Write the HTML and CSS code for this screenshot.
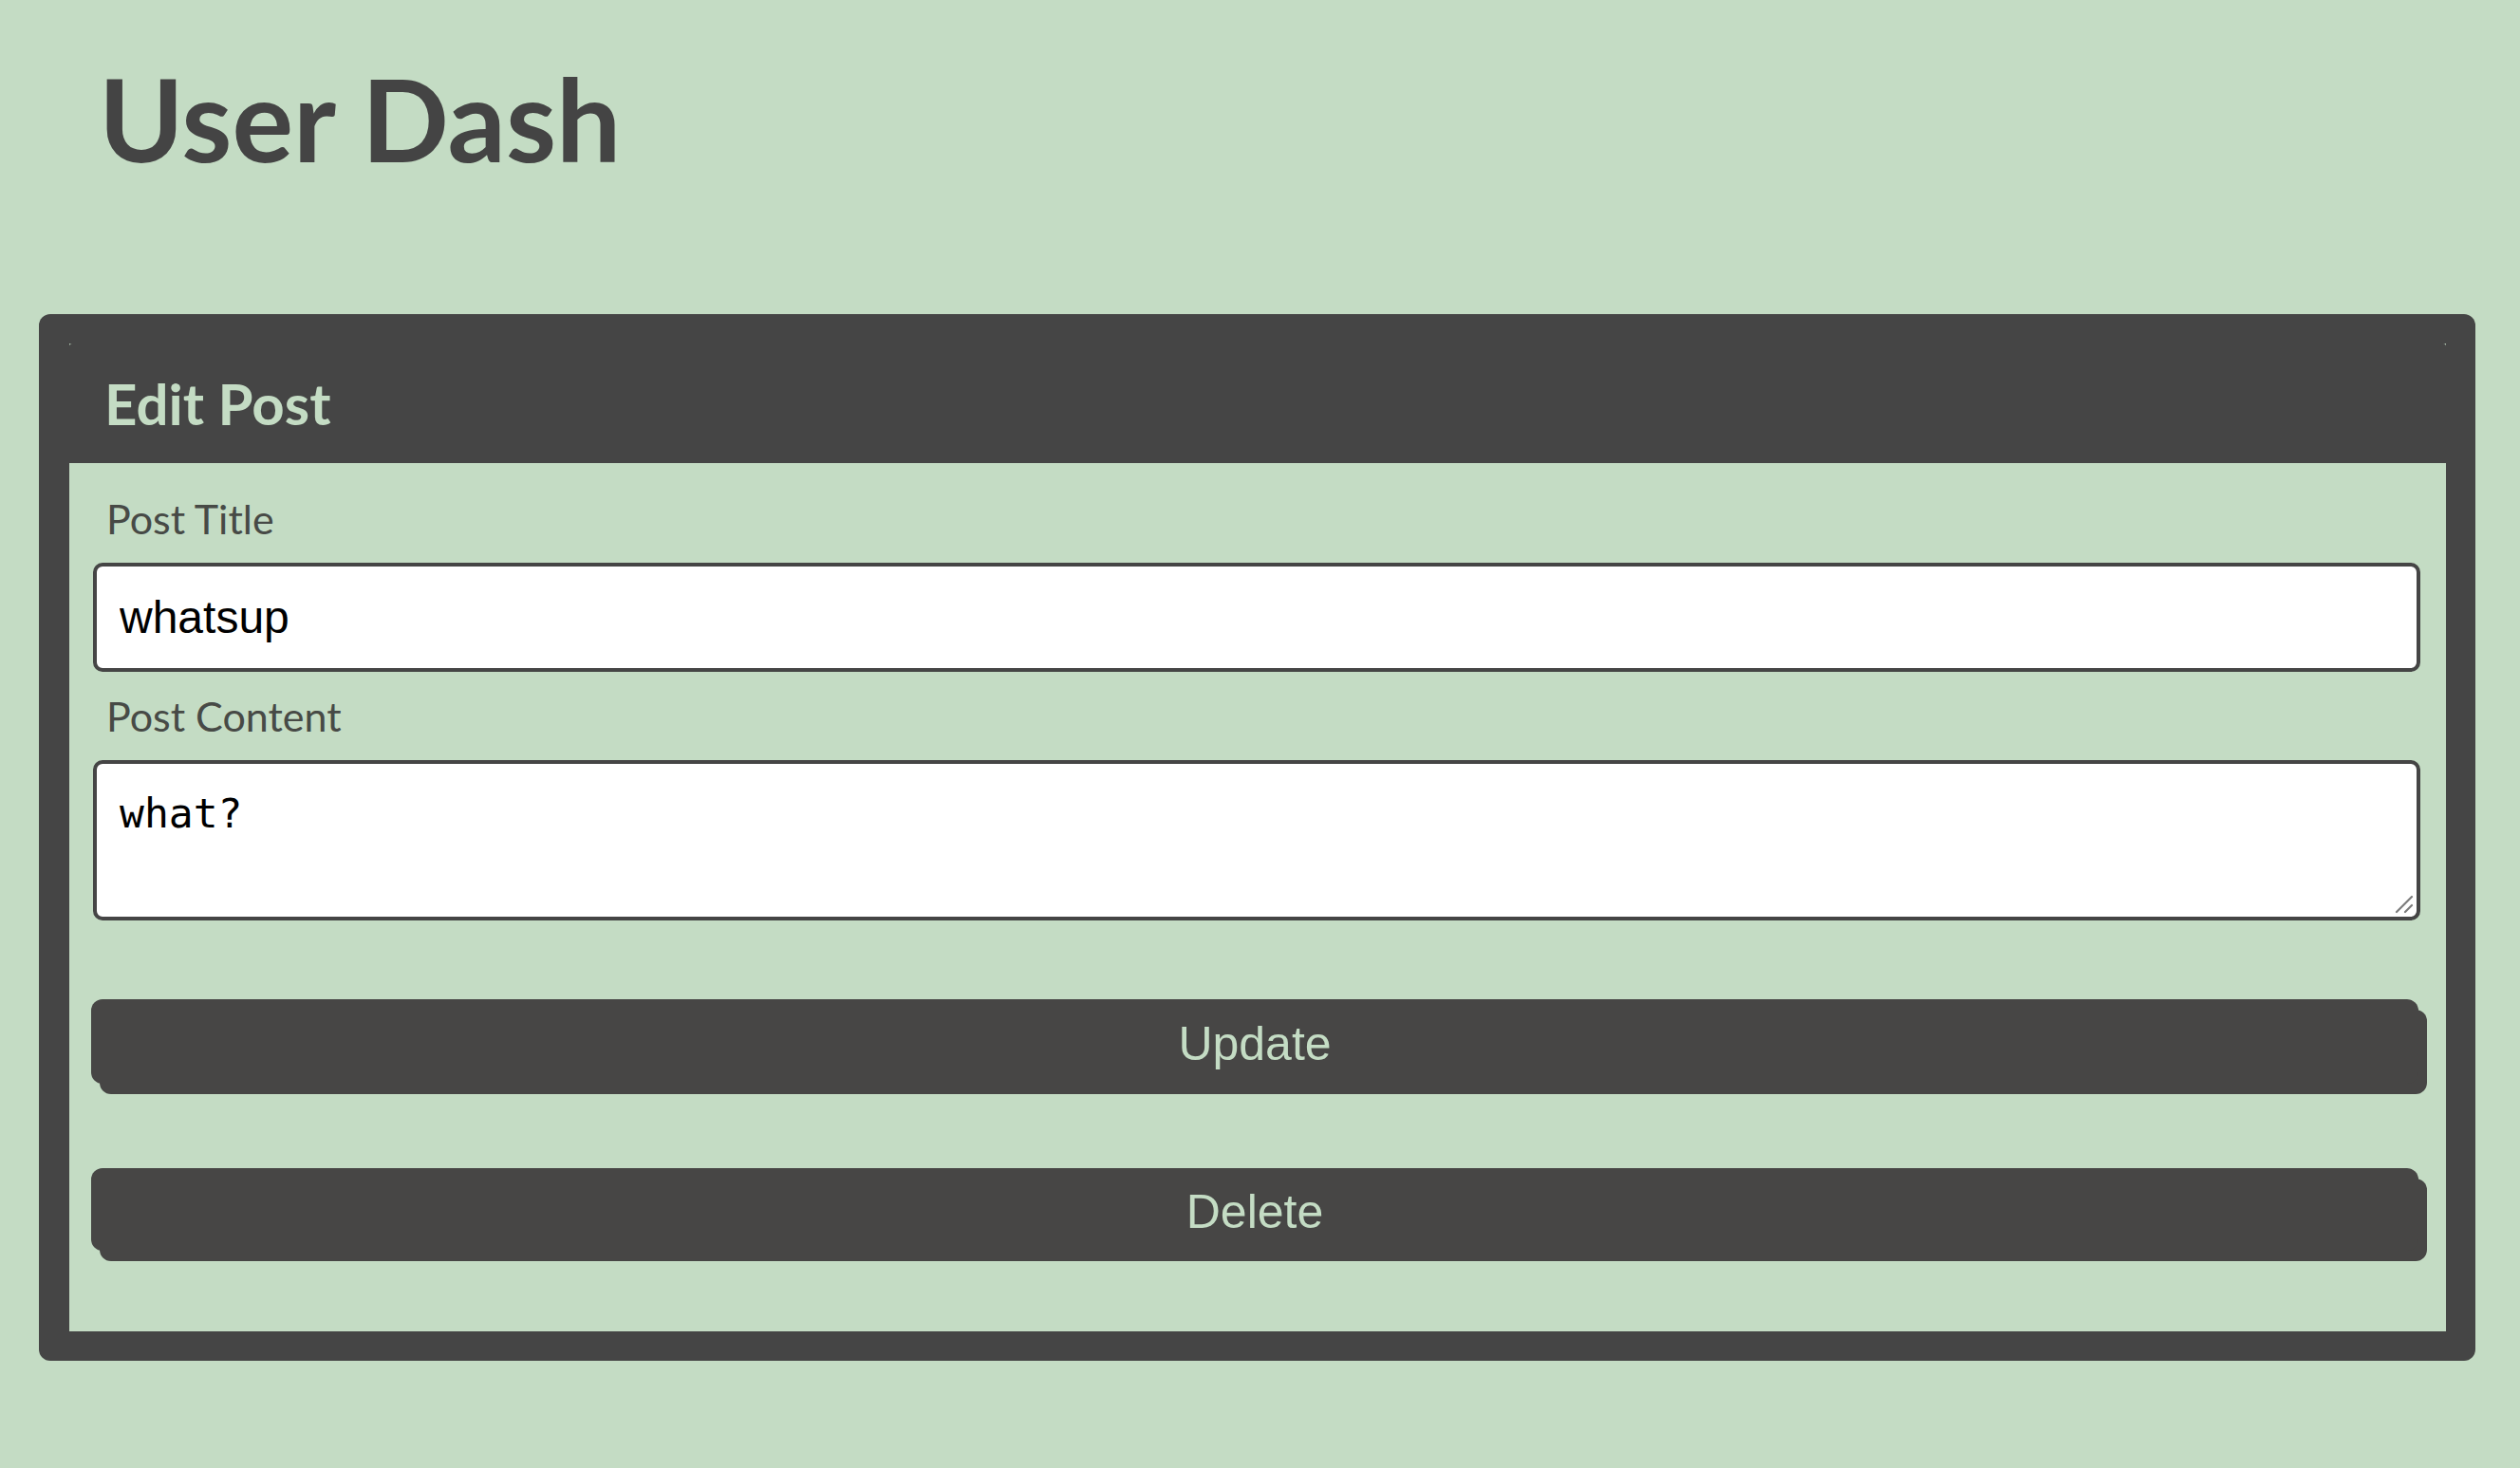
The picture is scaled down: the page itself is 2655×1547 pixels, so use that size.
FILE: index.html
```html
<!DOCTYPE html>
<html lang="en">
<head>
<meta charset="utf-8">
<title>User Dash</title>
<link rel="stylesheet" href="styles.css">
</head>
<body>
<h1 class="page-title">User Dash</h1>
<section class="card">
  <div class="card-inner">
    <header class="card-header">
      <h2 class="card-title">Edit Post</h2>
    </header>
    <form class="card-body">
      <label class="field-label" for="post-title">Post Title</label>
      <input class="field-input" id="post-title" type="text" value="whatsup">
      <label class="field-label" for="post-content">Post Content</label>
      <div class="textarea-wrap">
        <textarea class="field-textarea" id="post-content">what?</textarea>
        <svg class="resize-grip" width="20" height="20" viewBox="0 0 20 20" aria-hidden="true">
          <line x1="2" y1="18" x2="18" y2="2" stroke="#7b7b7b" stroke-width="2.2" stroke-linecap="round"/>
          <line x1="11" y1="18" x2="18" y2="11" stroke="#7b7b7b" stroke-width="2.2" stroke-linecap="round"/>
        </svg>
      </div>
      <button class="btn btn-update" type="button">Update</button>
      <button class="btn btn-delete" type="button">Delete</button>
    </form>
  </div>
</section>
</body>
</html>
```
FILE: styles.css
```css
html, body {
  margin: 0;
  padding: 0;
}
body {
  background: #c4dcc4;
  font-family: Lato, "Liberation Sans", sans-serif;
  color: #454545;
  min-height: 1547px;
}
.page-title {
  margin: 52px 0 0 104px;
  font-family: Lato, sans-serif;
  font-weight: 700;
  font-size: 121px;
  line-height: normal;
  color: #444444;
}
.card {
  margin: 134px 0 0 41px;
  width: 2567px;
  box-sizing: border-box;
  background: #454545;
  border-radius: 12px;
  padding: 31px 31px 31px 32px;
}
.card-inner {
  background: #c4dcc4;
}
.card-header {
  background: #454545;
  border-radius: 3px 3px 0 0;
  padding: 27px 37px;
}
.card-title {
  margin: 0;
  font-family: Lato, sans-serif;
  font-weight: 700;
  font-size: 60px;
  line-height: normal;
  color: #c4dcc4;
}
.card-body {
  display: flex;
  flex-direction: column;
  padding: 33px 27px 85px 25px;
  margin: 0;
}
.field-label {
  display: block;
  margin: 0 0 21px 14px;
  font-family: Lato, sans-serif;
  font-size: 43px;
  line-height: normal;
  color: #474a46;
}
.field-input {
  box-sizing: border-box;
  width: 100%;
  height: 115px;
  margin: 0 0 21px 0;
  padding: 0 24px;
  border: 4px solid #454545;
  border-radius: 10px;
  background: #ffffff;
  font-family: "Liberation Sans", Arial, sans-serif;
  font-size: 48px;
  color: #000000;
  outline: none;
}
.textarea-wrap {
  position: relative;
  display: flex;
}
.field-textarea {
  box-sizing: border-box;
  width: 100%;
  height: 169px;
  margin: 0;
  padding: 27px 24px 0 24px;
  border: 4px solid #454545;
  border-radius: 10px;
  background: #ffffff;
  font-family: "DejaVu Sans Mono", "Liberation Mono", monospace;
  font-size: 43px;
  line-height: normal;
  color: #000000;
  outline: none;
  resize: none;
}
.resize-grip {
  position: absolute;
  right: 7px;
  bottom: 7px;
}
.btn {
  box-sizing: border-box;
  width: 100%;
  height: 89px;
  margin: 0 2px 0 -2px;
  padding: 4px 0 0 0;
  border: none;
  border-radius: 12px;
  background: #474645;
  box-shadow: 9px 11px 0 #474645;
  color: #c4dcc4;
  font-family: "Liberation Sans", Arial, sans-serif;
  font-size: 50px;
  cursor: pointer;
}
.btn-update {
  margin-top: 83px;
}
.btn-delete {
  margin-top: 89px;
  height: 87px;
}
```
